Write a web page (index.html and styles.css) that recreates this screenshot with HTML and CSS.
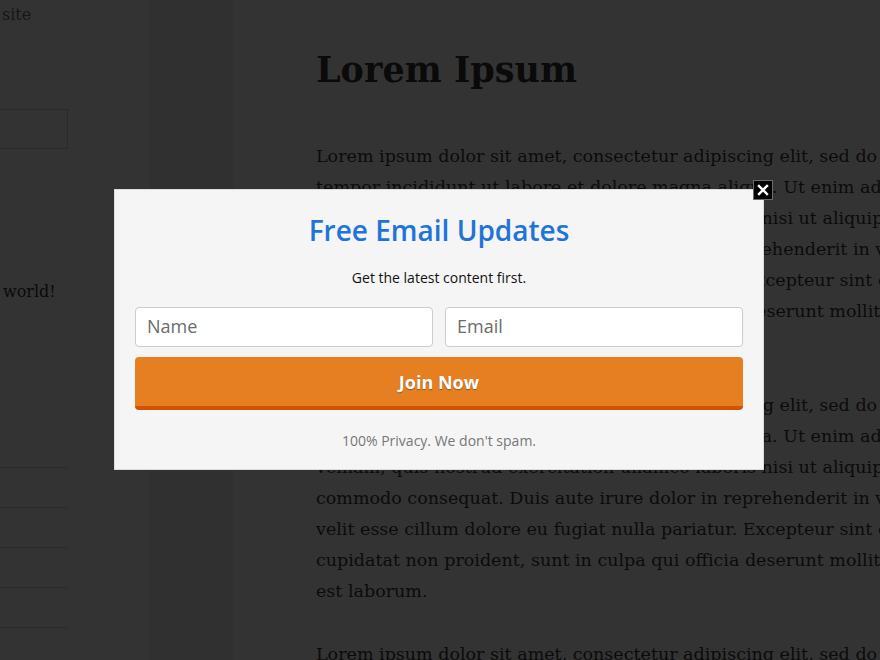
FILE: index.html
```html
<!DOCTYPE html>
<html lang="en">
<head>
<meta charset="utf-8">
<title>Lorem Ipsum</title>
<link rel="stylesheet" href="styles.css">
</head>
<body>
<div class="page">
  <aside class="sidebar">
    <p class="site-desc">site</p>
    <div class="search-box"></div>
    <p class="recent">world!</p>
    <ul class="widget-list">
      <li></li>
      <li></li>
      <li></li>
      <li></li>
      <li></li>
    </ul>
  </aside>
  <div class="gutter"></div>
  <main class="content">
    <h1 class="title">Lorem Ipsum</h1>
    <p class="para">Lorem ipsum dolor sit amet, consectetur adipiscing elit, sed do eiusmod<br>tempor incididunt ut labore et dolore magna aliqua. Ut enim ad minim<br>veniam, quis nostrud exercitation ullamco laboris nisi ut aliquip ex ea<br>commodo consequat. Duis aute irure dolor in reprehenderit in voluptate<br>velit esse cillum dolore eu fugiat nulla pariatur. Excepteur sint occaecat<br>cupidatat non proident, sunt in culpa qui officia deserunt mollit anim id<br>est laborum.</p>
    <p class="para">Lorem ipsum dolor sit amet, consectetur adipiscing elit, sed do eiusmod<br>tempor incididunt ut labore et dolore magna aliqua. Ut enim ad minim<br>veniam, quis nostrud exercitation ullamco laboris nisi ut aliquip ex ea<br>commodo consequat. Duis aute irure dolor in reprehenderit in voluptate<br>velit esse cillum dolore eu fugiat nulla pariatur. Excepteur sint occaecat<br>cupidatat non proident, sunt in culpa qui officia deserunt mollit anim id<br>est laborum.</p>
    <p class="para">Lorem ipsum dolor sit amet, consectetur adipiscing elit, sed do eiusmod<br>tempor incididunt ut labore et dolore magna aliqua.</p>
  </main>
</div>
<div class="overlay"></div>
<div class="popup">
  <button class="close" type="button" aria-label="Close">
    <svg width="12" height="12" viewBox="0 0 12 12"><path d="M2 2 L10 10 M10 2 L2 10" stroke="#fff" stroke-width="2.4" stroke-linecap="square"/></svg>
  </button>
  <h2 class="popup-title">Free Email Updates</h2>
  <p class="popup-sub">Get the latest content first.</p>
  <form class="popup-form">
    <div class="fields">
      <input class="field" type="text" placeholder="Name">
      <input class="field" type="email" placeholder="Email">
    </div>
    <button class="join" type="button">Join Now</button>
  </form>
  <p class="popup-note">100% Privacy. We don't spam.</p>
</div>
</body>
</html>
```
FILE: styles.css
```css
html, body {
  margin: 0;
  padding: 0;
}
body {
  width: 880px;
  height: 660px;
  overflow: hidden;
  background: #fff;
  font-family: "DejaVu Serif", "Liberation Serif", serif;
  color: #333;
}
.page {
  display: flex;
  height: 660px;
  overflow: hidden;
}
.sidebar {
  width: 68px;
  padding: 3px 82px 0 0;
  background: #fff;
  flex-shrink: 0;
}
.site-desc {
  margin: 0 0 0 2px;
  font-size: 16px;
  line-height: 24px;
  color: #707070;
}
.search-box {
  margin: 82px 0 0 -2px;
  height: 38px;
  border: 1px solid #d2d2d2;
}
.recent {
  margin: 131px 0 0 3px;
  font-size: 16px;
  line-height: 24px;
  color: #333;
}
.widget-list {
  list-style: none;
  margin: 163px 0 0;
  padding: 0;
}
.widget-list li {
  height: 39px;
  border-top: 1px solid #d8d8d8;
}
.gutter {
  width: 83px;
  background: #f1f1f1;
  flex-shrink: 0;
}
.content {
  flex: 1;
  padding: 46px 0 0 83px;
  white-space: nowrap;
  background: #fff;
  min-width: 0;
  overflow: hidden;
}
.title {
  margin: 0 0 47px;
  font-size: 35px;
  line-height: 48px;
  font-weight: 700;
  color: #333;
}
.para {
  margin: 0 0 32px;
  font-size: 17.5px;
  line-height: 31px;
  color: #3a3a3a;
}
.overlay {
  position: fixed;
  inset: 0;
  background: rgba(0, 0, 0, 0.8);
}
.popup {
  position: fixed;
  left: 114px;
  top: 189px;
  width: 650px;
  box-sizing: border-box;
  padding: 23px 20px 18px;
  background: #f5f5f5;
  border: 1px solid #dcdcdc;
  font-family: "Open Sans", "Noto Sans", sans-serif;
  text-align: center;
}
.close {
  position: absolute;
  top: -10px;
  right: -10px;
  width: 20px;
  height: 20px;
  box-sizing: border-box;
  padding: 0;
  background: #000;
  border: 1px solid #6a6a6a;
  display: flex;
  align-items: center;
  justify-content: center;
  cursor: pointer;
}
.close svg {
  display: block;
}
.popup-title {
  margin: 0;
  font-size: 28px;
  line-height: 34px;
  font-weight: 600;
  color: #1e74d8;
}
.popup-sub {
  margin: 21px 0 0;
  font-size: 14px;
  line-height: 20px;
  color: #111;
}
.popup-form {
  margin: 19px 0 0;
  display: flex;
  flex-direction: column;
  gap: 10px;
}
.fields {
  display: grid;
  grid-template-columns: 1fr 1fr;
  gap: 12px;
}
.field {
  height: 40px;
  box-sizing: border-box;
  margin: 0;
  padding: 0 11px 3px;
  border: 1px solid #cccccc;
  border-radius: 4px;
  background: #fff;
  font-family: "Open Sans", "Noto Sans", sans-serif;
  font-size: 18px;
  color: #555;
}
.field::placeholder {
  color: #6b6b6b;
  opacity: 1;
}
.join {
  height: 53px;
  box-sizing: border-box;
  margin: 0;
  padding: 0;
  border: 0;
  border-bottom: 4px solid #d35400;
  border-radius: 4px;
  background: #e67e22;
  color: #fff;
  font-family: "Open Sans", "Noto Sans", sans-serif;
  font-size: 18px;
  font-weight: 700;
  text-shadow: 0 1px 1px rgba(0, 0, 0, 0.35);
  cursor: pointer;
}
.popup-note {
  margin: 21px 0 0;
  font-size: 14px;
  line-height: 20px;
  color: #777;
}
```
